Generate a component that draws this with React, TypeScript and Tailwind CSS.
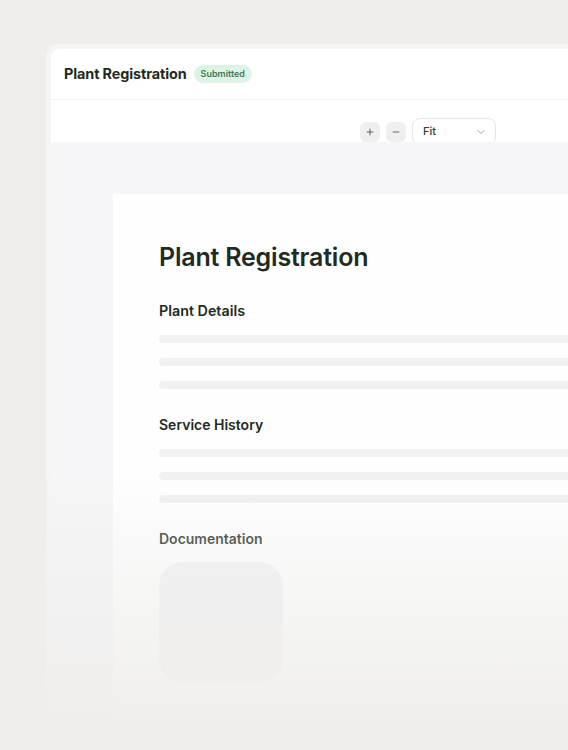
import { ChevronDown, Minus, Plus } from "lucide-react";

function Bar() {
  return <div className="h-2 w-[480px] rounded-full bg-[#f2f1f2]" />;
}

export default function App() {
  return (
    <div
      className="relative h-[750px] w-[568px] overflow-hidden bg-[#efeeec] pl-[46px] pt-[44px]"
      style={{ fontFamily: "Inter, 'Noto Sans', sans-serif" }}
    >
      {/* outer frame */}
      <div className="w-[620px] rounded-xl bg-[#f6f5f4] p-[5px]">
        <div className="overflow-hidden rounded-lg bg-white">
          {/* header */}
          <div className="flex h-[51px] items-center gap-[7px] border-b border-[#f3f3f2] px-[13px]">
            <h1 className="text-[14.4px] font-bold tracking-[-0.1px] text-[#1f2a22]">
              Plant Registration
            </h1>
            <span className="rounded-full bg-[#def3e7] px-[7px] py-[2px] text-[9px] font-semibold text-[#3b7d57]">
              Submitted
            </span>
          </div>

          {/* toolbar */}
          <div className="flex h-[42px] items-start gap-[6px] overflow-hidden pl-[309px] pt-[22px]">
            <button className="flex h-5 w-5 items-center justify-center rounded-md bg-[#f0eff0] text-[#3a3a3a]">
              <Plus className="h-[10px] w-[10px]" strokeWidth={1.8} />
            </button>
            <button className="flex h-5 w-5 items-center justify-center rounded-md bg-[#f0eff0] text-[#3a3a3a]">
              <Minus className="h-[10px] w-[10px]" strokeWidth={1.8} />
            </button>
            <div className="-mt-[4px] flex h-[27px] w-[84px] items-center justify-between rounded-lg border border-[#e6e5e6] bg-white pl-[10px] pr-[8px]">
              <span className="text-[11px] font-medium text-[#3a3a3a]">Fit</span>
              <ChevronDown className="h-3 w-3 text-[#8a8a8a]" strokeWidth={1.6} />
            </div>
          </div>

          {/* canvas */}
          <div className="h-[620px] bg-[#f6f5f7] pl-[62px] pt-[52px]">
            <div className="h-[560px] bg-[#fefefe] pl-[46px] pt-[47px]">
              <h2 className="text-[25px] font-semibold leading-8 tracking-[-0.2px] text-[#1f2a22]">
                Plant Registration
              </h2>

              <h3 className="mt-[28px] text-[14.3px] font-semibold leading-5 text-[#1f2a22]">Plant Details</h3>
              <div className="mt-[14px] flex flex-col gap-[15px]">
                <Bar />
                <Bar />
                <Bar />
              </div>

              <h3 className="mt-[26px] text-[14px] font-semibold leading-5 text-[#1f2a22]">Service History</h3>
              <div className="mt-[14px] flex flex-col gap-[15px]">
                <Bar />
                <Bar />
                <Bar />
              </div>

              <h3 className="mt-[26px] text-[14px] font-semibold leading-5 text-[#1f2a22]">Documentation</h3>
              <div className="mt-[13px] h-[121px] w-[124px] rounded-3xl bg-[#f2f1f2]" />
            </div>
          </div>
        </div>
      </div>

      {/* bottom fade */}
      <div className="pointer-events-none absolute inset-x-0 top-[470px] h-[260px] bg-gradient-to-b from-[#efeeec]/0 to-[#efeeec]" />
      <div className="pointer-events-none absolute inset-x-0 top-[728px] h-[22px] bg-[#efeeec]" />
    </div>
  );
}
